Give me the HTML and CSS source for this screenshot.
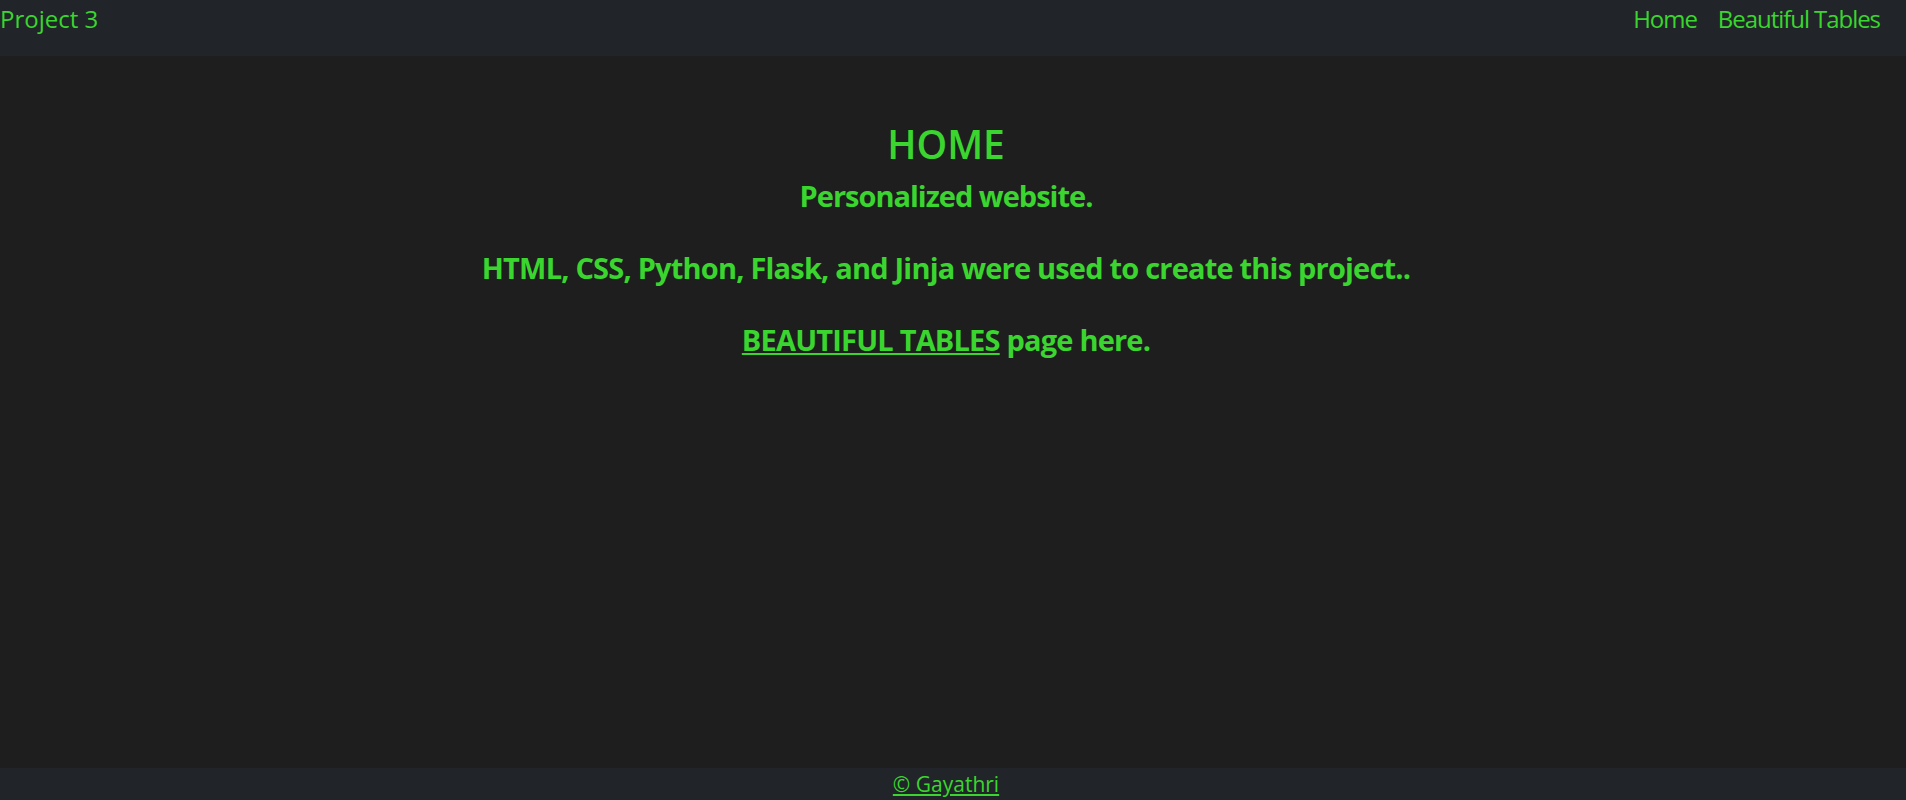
FILE: index.html
```html
<!DOCTYPE html>
<html lang="en">
<head>
<meta charset="utf-8">
<title>Project 3</title>
<link rel="stylesheet" href="styles.css">
</head>
<body>
<nav class="navbar">
  <a class="brand" href="#">Project 3</a>
  <div class="nav-links">
    <a class="nav-link" href="#">Home</a>
    <a class="nav-link" href="#">Beautiful Tables</a>
  </div>
</nav>
<main class="content">
  <h1 class="title">HOME</h1>
  <h3 class="subtitle">Personalized website.</h3>
  <h3 class="line">HTML, CSS, Python, Flask, and Jinja were used to create this project..</h3>
  <h3 class="line"><a class="inline-link" href="#">BEAUTIFUL TABLES</a> page here.</h3>
</main>
<footer class="footer">
  <a class="footer-link" href="#">© Gayathri</a>
</footer>
</body>
</html>
```
FILE: styles.css
```css
html, body {
  margin: 0;
  padding: 0;
}
body {
  background: #1e1e1e;
  color: #3ad52e;
  font-family: "Open Sans", "Noto Sans", sans-serif;
  min-height: 100vh;
  display: flex;
  flex-direction: column;
}
a {
  color: #3ad52e;
}
.navbar {
  height: 56px;
  box-sizing: border-box;
  background: #212529;
  display: flex;
  justify-content: space-between;
  align-items: flex-start;
  padding: 1px 26px 0 0;
}
.brand {
  font-size: 24px;
  line-height: 36px;
  text-decoration: none;
}
.nav-links {
  display: flex;
  gap: 21px;
}
.nav-link {
  font-size: 24px;
  line-height: 36px;
  letter-spacing: -1.05px;
  text-decoration: none;
}
.content {
  flex: 1;
  text-align: center;
  padding: 65px 14px 0 0;
}
.title {
  margin: 0;
  font-size: 39px;
  line-height: 46px;
  font-weight: 600;
}
.subtitle {
  margin: 11px 0 0;
  font-size: 29px;
  line-height: 36px;
  font-weight: 700;
  letter-spacing: -1px;
}
.line {
  margin: 36px 0 0;
  font-size: 29px;
  line-height: 36px;
  font-weight: 700;
  letter-spacing: -0.8px;
}
.footer {
  background: #212529;
  height: 32px;
  text-align: center;
  padding-right: 14px;
}
.footer-link {
  font-size: 21px;
  line-height: 32px;
}
```
